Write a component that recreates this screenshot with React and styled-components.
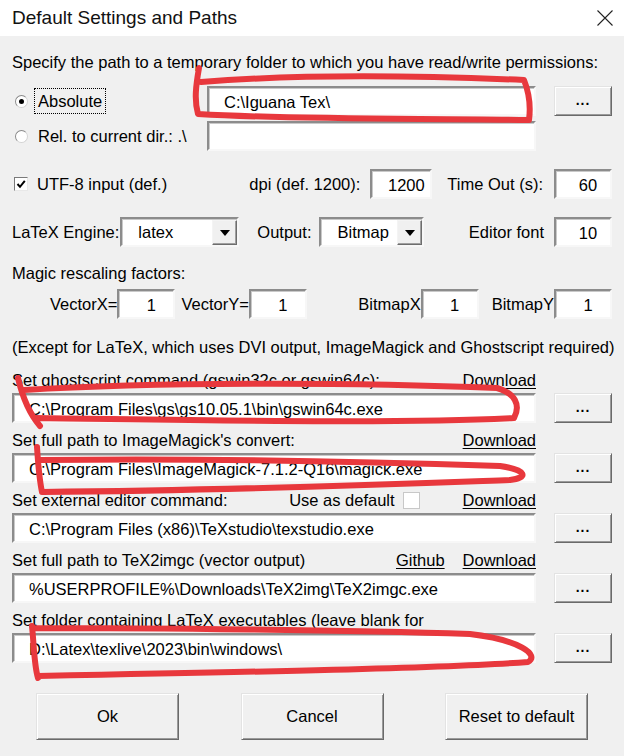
import React from 'react';
import styled, { createGlobalStyle } from 'styled-components';

const GlobalStyle = createGlobalStyle`
  html, body { margin: 0; padding: 0; background: #f0f0f0; }
  * { box-sizing: border-box; }
`;

const Window = styled.div`
  position: relative;
  width: 624px;
  height: 756px;
  background: #f0f0f0;
  overflow: hidden;
  font-family: "Liberation Sans", Arial, sans-serif;
  font-size: 16.5px;
  color: #000;
`;

const TitleBar = styled.div`
  height: 36px;
  background: #fff;
  display: flex;
  align-items: center;
  justify-content: space-between;
  padding: 0 10px 0 12px;
`;

const Title = styled.div`
  font-size: 19px;
  color: #111;
`;

const Body = styled.div`
  display: flex;
  flex-direction: column;
  padding: 16px 12px 0 12px;
`;

const Row = styled.div`
  display: flex;
  align-items: center;
  height: ${p => p.$h || 30}px;
  margin-top: ${p => p.$mt || 0}px;
  padding-left: ${p => p.$pl || 0}px;
`;

const Text = styled.span`
  white-space: nowrap;
  line-height: 20px;
  margin-left: ${p => p.$ml || 0}px;
  margin-right: ${p => p.$mr || 0}px;
`;

const Spacer = styled.div`
  flex: 1;
`;

const RadioOption = styled.div`
  width: 195px;
  display: flex;
  align-items: center;
  height: 100%;
`;

const RadioCircle = styled.span`
  width: 13px;
  height: 13px;
  margin-left: 3px;
  border-radius: 50%;
  border: 1px solid #8a8a8a;
  border-right-color: #d4d4d4;
  border-bottom-color: #d4d4d4;
  background: #fff;
  display: flex;
  align-items: center;
  justify-content: center;
  &::after {
    content: '';
    width: 5px;
    height: 5px;
    border-radius: 50%;
    background: ${p => (p.$on ? '#000' : 'transparent')};
  }
`;

const FocusLabel = styled.span`
  margin-left: 6px;
  padding: 2px 3px;
  line-height: 20px;
  border: 1px dotted ${p => (p.$focus ? '#000' : 'transparent')};
  white-space: nowrap;
`;

const Field = styled.input`
  width: ${p => (p.$w ? `${p.$w}px` : 'auto')};
  flex: ${p => (p.$w ? 'none' : '1')};
  min-width: 0;
  height: 30px;
  margin: 0;
  background: #fff;
  border: 2px solid;
  border-color: #8c8c8c #f7f7f7 #f7f7f7 #8c8c8c;
  box-shadow: inset 1px 1px 0 #c9c9c9;
  font-family: inherit;
  font-size: inherit;
  color: #000;
  padding: 2px 0 0 ${p => (p.$center ? 10 : 15)}px;
  text-align: ${p => (p.$center ? 'center' : 'left')};
  outline: none;
`;

const Combo = styled.div`
  width: ${p => p.$w}px;
  height: 30px;
  display: flex;
  align-items: center;
  background: #fff;
  border: 2px solid;
  border-color: #8c8c8c #f7f7f7 #f7f7f7 #8c8c8c;
  box-shadow: inset 1px 1px 0 #c9c9c9;
  padding: 1px 0 0 16px;
  margin-left: ${p => p.$ml || 0}px;
`;

const ComboValue = styled.span`
  flex: 1;
  white-space: nowrap;
`;

const DropBtn = styled.span`
  width: 25px;
  height: 25px;
  margin-right: 0px;
  background: #f0f0f0;
  border: 1px solid;
  border-color: #f4f4f4 #6d6d6d #6d6d6d #f4f4f4;
  box-shadow: inset -1px -1px 0 #a0a0a0;
  display: flex;
  align-items: center;
  justify-content: center;
  &::after {
    content: '';
    border-left: 5px solid transparent;
    border-right: 5px solid transparent;
    border-top: 6px solid #000;
  }
`;

const Btn = styled.button`
  width: ${p => p.$w}px;
  height: ${p => p.$h}px;
  flex: none;
  margin: 0 0 0 ${p => p.$ml || 0}px;
  padding: 0;
  background: #f0f0f0;
  border: 1px solid;
  border-color: #e3e3e3 #6a6a6a #6a6a6a #e3e3e3;
  box-shadow: inset 1px 1px 0 #fff, inset -1px -1px 0 #9a9a9a;
  font-family: inherit;
  font-size: inherit;
  color: #000;
  line-height: 1;
`;

const Dots = styled.span`
  font-weight: bold;
  font-size: 14px;
  letter-spacing: 1px;
  position: relative;
  top: -2px;
`;

const CheckBox = styled.span`
  width: ${p => p.$s || 14}px;
  height: ${p => p.$s || 14}px;
  flex: none;
  margin-left: ${p => p.$ml || 0}px;
  background: #fff;
  border: 1px solid;
  border-color: ${p => (p.$light ? '#c8c8c8' : '#7a7a7a #e8e8e8 #e8e8e8 #7a7a7a')};
  display: flex;
  align-items: center;
  justify-content: center;
`;

const PathGroup = styled.div`
  display: grid;
  grid-template-columns: 1fr 58px;
  column-gap: 18px;
  grid-template-rows: 20px 30px;
  row-gap: 3px;
  margin-top: ${p => p.$mt || 0}px;
`;

const LabelRow = styled.div`
  display: flex;
  align-items: center;
  height: 20px;
  line-height: 20px;
  white-space: nowrap;
`;

const Links = styled.div`
  margin-left: auto;
  display: flex;
  align-items: center;
  gap: ${p => p.$gap || 18}px;
`;

const Link = styled.span`
  text-decoration: underline;
  text-underline-offset: 2px;
  white-space: nowrap;
`;

const UseDefault = styled.div`
  display: flex;
  align-items: center;
  gap: 8px;
`;

const ButtonBar = styled.div`
  display: flex;
  justify-content: space-between;
  padding: 0 24px;
  margin-top: 30px;
`;

const Overlay = styled.svg`
  position: absolute;
  left: 0;
  top: 0;
  pointer-events: none;
`;

const Check = () => (
  <svg width="10" height="10" viewBox="0 0 10 10">
    <path d="M1.5 5 L4 7.8 L8.8 1.8" fill="none" stroke="#000" strokeWidth="2" />
  </svg>
);

const CloseIcon = () => (
  <svg width="18" height="18" viewBox="0 0 18 18">
    <path d="M1.5 1.5 L16.5 16.5 M16.5 1.5 L1.5 16.5" stroke="#222" strokeWidth="1.1" />
  </svg>
);

const BrowseBtn = () => (
  <Btn $w={58} $h={30}>
    <Dots>...</Dots>
  </Btn>
);

const PathSetting = ({ label, value, links, mt }) => (
  <PathGroup $mt={mt}>
    <LabelRow>
      {label}
      {links}
    </LabelRow>
    <span />
    <Field readOnly defaultValue={value} />
    <BrowseBtn />
  </PathGroup>
);

export default function App() {
  return (
    <Window>
      <GlobalStyle />
      <TitleBar>
        <Title>Default Settings and Paths</Title>
        <CloseIcon />
      </TitleBar>
      <Body>
        <Row $h={20}>
          <Text>Specify the path to a temporary folder to which you have read/write permissions:</Text>
        </Row>
        <Row $mt={14}>
          <RadioOption>
            <RadioCircle $on />
            <FocusLabel $focus>Absolute</FocusLabel>
          </RadioOption>
          <Field $w={329} readOnly defaultValue="C:\Iguana Tex\" />
          <Spacer />
          <BrowseBtn />
        </Row>
        <Row $mt={5}>
          <RadioOption>
            <RadioCircle />
            <FocusLabel>Rel. to current dir.: .\</FocusLabel>
          </RadioOption>
          <Field $w={329} readOnly defaultValue="" />
        </Row>
        <Row $mt={18}>
          <CheckBox $ml={2}>
            <Check />
          </CheckBox>
          <Text $ml={9}>UTF-8 input (def.)</Text>
          <Spacer />
          <Text $mr={10}>dpi (def. 1200):</Text>
          <Field $w={62} $center readOnly defaultValue="1200" />
          <Text $ml={15} $mr={11}>Time Out (s):</Text>
          <Field $w={58} $center readOnly defaultValue="60" />
        </Row>
        <Row $mt={18}>
          <Text>LaTeX Engine:</Text>
          <Combo $w={119} $ml={1}>
            <ComboValue>latex</ComboValue>
            <DropBtn />
          </Combo>
          <Text $ml={18} $mr={8}>Output:</Text>
          <Combo $w={105}>
            <ComboValue>Bitmap</ComboValue>
            <DropBtn />
          </Combo>
          <Spacer />
          <Text $mr={10}>Editor font</Text>
          <Field $w={58} $center readOnly defaultValue="10" />
        </Row>
        <Row $h={20} $mt={16}>
          <Text>Magic rescaling factors:</Text>
        </Row>
        <Row $mt={6} $pl={38}>
          <Text>VectorX=</Text>
          <Field $w={58} $center readOnly defaultValue="1" />
          <Text $ml={6}>VectorY=</Text>
          <Field $w={58} $center readOnly defaultValue="1" />
          <Spacer />
          <Text>BitmapX</Text>
          <Field $w={58} $center readOnly defaultValue="1" />
          <Text $ml={13}>BitmapY</Text>
          <Field $w={58} $center readOnly defaultValue="1" />
        </Row>
        <Row $h={20} $mt={18}>
          <Text>(Except for LaTeX, which uses DVI output, ImageMagick and Ghostscript required)</Text>
        </Row>
        <PathSetting
          mt={13}
          label="Set ghostscript command (gswin32c or gswin64c):"
          value="C:\Program Files\gs\gs10.05.1\bin\gswin64c.exe"
          links={<Links><Link>Download</Link></Links>}
        />
        <PathSetting
          mt={7}
          label="Set full path to ImageMagick's convert:"
          value="C:\Program Files\ImageMagick-7.1.2-Q16\magick.exe"
          links={<Links><Link>Download</Link></Links>}
        />
        <PathSetting
          mt={7}
          label="Set external editor command:"
          value="C:\Program Files (x86)\TeXstudio\texstudio.exe"
          links={
            <Links $gap={43}>
              <UseDefault>
                <span>Use as default</span>
                <CheckBox $s={17} $light />
              </UseDefault>
              <Link>Download</Link>
            </Links>
          }
        />
        <PathSetting
          mt={7}
          label="Set full path to TeX2imgc (vector output)"
          value="%USERPROFILE%\Downloads\TeX2img\TeX2imgc.exe"
          links={<Links><Link>Github</Link><Link>Download</Link></Links>}
        />
        <PathSetting
          mt={7}
          label="Set folder containing LaTeX executables (leave blank for"
          value="D:\Latex\texlive\2023\bin\windows\"
          links={null}
        />
        <ButtonBar>
          <Btn $w={143} $h={47}>Ok</Btn>
          <Btn $w={143} $h={47}>Cancel</Btn>
          <Btn $w={143} $h={47}>Reset to default</Btn>
        </ButtonBar>
      </Body>
      <Overlay width="624" height="756" viewBox="0 0 624 756">
        <g fill="none" stroke="#e8383d" strokeWidth="6" strokeLinecap="round" strokeLinejoin="round">
          <path d="M199 68 C196 85, 194 100, 198 114 C300 120, 430 118, 529 120 C531 105, 528 90, 524 80 C430 76, 300 74, 201 82" />
          <path d="M18 378 C22 395, 28 412, 40 426 M24 390 C150 382, 350 382, 497 388 C515 393, 521 405, 514 418 C400 424, 200 420, 36 418" />
          <path d="M37 447 C38 462, 39 478, 42 492 M40 460 C200 458, 380 462, 500 466 C528 470, 528 478, 510 480 C400 484, 250 490, 42 492" />
          <path d="M32 626 C34 645, 34 665, 38 678 M34 628 C150 628, 350 630, 470 634 C520 640, 540 655, 528 662 C450 668, 250 672, 38 676" />
        </g>
      </Overlay>
    </Window>
  );
}
